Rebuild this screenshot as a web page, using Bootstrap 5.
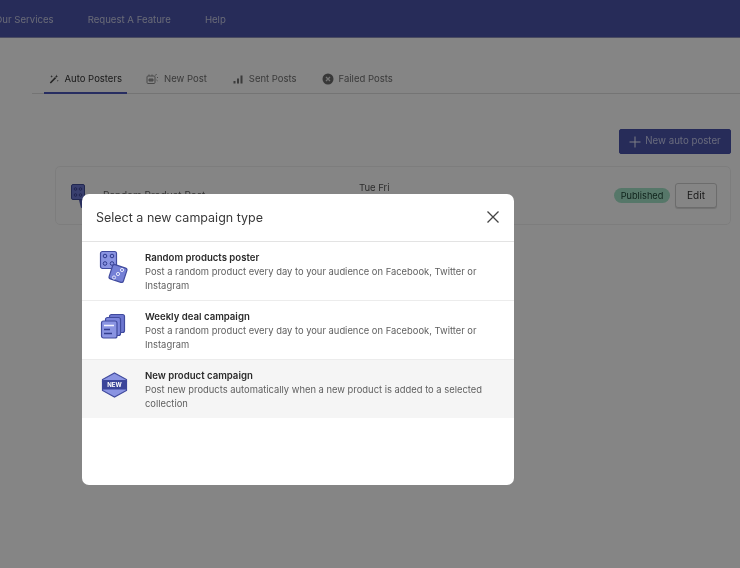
<!DOCTYPE html>
<html lang="en"><head><meta charset="utf-8"><title>Auto Posters</title>
<link rel="stylesheet" href="https://cdn.jsdelivr.net/npm/bootstrap@5.3.0/dist/css/bootstrap.min.css">
<style>
html,body{height:100%;overflow:hidden}
body{font-family:Inter,"Liberation Sans",sans-serif;background:#fbfbfb;font-size:9.5px;color:#333}
.app-shell{height:568px;position:relative;overflow:hidden}
.top-bar{height:38px;background:#4a53a8;border-bottom:1px solid #8a8fb8;color:#c5c8e0;gap:34px;margin-left:-5px;padding-top:2px;font-size:9.6px;line-height:1}
.tab-strip{margin:31px 0 0 32px;height:25px;border-bottom:1px solid #dcdcdc;padding-left:12px}
.tab-item{display:flex;align-items:center;gap:5px;height:25px;padding:0 5px 5px;color:#6f6f6f;margin-right:15px;white-space:nowrap}
.tab-item.is-on{color:#333;border-bottom:2px solid #4b56b8;margin-right:14px;width:83px;padding-bottom:3px}
.action-row{margin:35px 9px 0 0;justify-content:flex-end}
.new-btn{width:112px;height:25px;background:#4a53a8;border:1px solid #4650a8;border-radius:2px;color:#c4c8ea;font-size:9.7px;padding:0;display:flex;align-items:center;justify-content:center;gap:4px}
.post-card{margin:12px 9px 0 55px;height:59px;border:1px solid #ececec;border-radius:5px;background:#fcfcfc;padding:0 13px 0 15px}
.post-title{color:#666;margin-left:15px;width:256px;font-size:10px;flex:none}
.post-days{color:#555;margin-top:-14px}
.pub-badge{background:#a3e0c6;border-radius:8px;color:#1e4436;font-size:9.2px;height:15px;width:56px;line-height:15px;text-align:center;margin-right:5px}
.edit-btn{width:42px;height:25px;padding:0;font-size:10px;color:#333;background:#fcfcfc;border:1px solid #ccc;border-radius:3px;box-shadow:0 1px 1px rgba(0,0,0,.15)}
.dim-layer{position:absolute;inset:0;background:rgba(0,0,0,.47)}
.type-dialog{position:absolute;left:82px;top:194px;width:432px;height:291px;background:#fff;border-radius:7px;overflow:hidden}
.dialog-head{height:48px;border-bottom:1px solid #e3e3e3;padding:0 14px}
.dialog-head h2{font-size:12.5px;font-weight:400;margin:0;color:#3a3a3a}
.shut-btn{border:0;background:none;padding:0;width:14px;height:14px;display:block;margin-bottom:1px}
.type-row{height:59px;border-bottom:1px solid #ececec;padding:9px 10px 0 17px;gap:16px}
.type-row.is-sel{background:#f5f5f5;border-bottom:0;height:58px}
.type-row h3{font-size:9.6px;font-weight:600;margin:0;color:#2a2a2a;line-height:14px}
.type-row p{font-size:9.4px;margin:0;color:#5f5f5f;line-height:14px}
.type-art{width:30px;height:38px;flex:none;margin-top:-1px}
.soft-edge{filter:blur(.4px)}
</style></head><body>
<div class="app-shell soft-edge">
  <nav class="top-bar d-flex align-items-center">
    <span>Our Services</span><span>Request A Feature</span><span>Help</span>
  </nav>
  <div class="tab-strip d-flex">
    <div class="tab-item is-on"><svg width="12" height="12" viewBox="0 0 12 12"><path d="M1.500 10.500 7.500 4.500" stroke="#444" stroke-width="1.800"/><path d="M8.500 1 9 2.500 10.500 3 9 3.500 8.500 5 8 3.500 6.500 3 8 2.500ZM3 1.500l.4 1.100 1.100.4-1.100.4L3 4.500l-.4-1.100L1.500 3l1.100-.4ZM10 7l.3.8.8.3-.8.3-.3.8-.3-.8-.8-.3.8-.3Z" fill="#444"/></svg><span>Auto Posters</span></div>
    <div class="tab-item"><svg width="13" height="12" viewBox="0 0 13 12" fill="none" stroke="#8a8a8a"><rect x="1" y="3" width="8" height="7.500" rx="1"/><path d="M3 3V1.500M6 3V1.500M10.500 1 9.500 2.500M11 4.500H12M10.500 7l1 .8"/><path d="M3 6h4v2H3z" fill="#9a9a9a"/></svg><span>New Post</span></div>
    <div class="tab-item"><svg width="12" height="12" viewBox="0 0 12 12" fill="#707070"><rect x="1.500" y="8" width="2" height="2.500"/><rect x="5" y="5.500" width="2" height="5"/><rect x="8.500" y="2.500" width="2" height="8"/></svg><span>Sent Posts</span></div>
    <div class="tab-item"><svg width="12" height="12" viewBox="0 0 12 12"><circle cx="6" cy="6" r="5.500" fill="#6a6a6a"/><path d="M4 4l4 4M8 4l-4 4" stroke="#ddd" stroke-width="1.300"/></svg><span>Failed Posts</span></div>
  </div>
  <div class="action-row d-flex">
    <button class="btn new-btn" type="button"><svg width="12" height="12" viewBox="0 0 12 12"><path d="M6 .5v11M.5 6h11" stroke="#eceefc"/></svg>New auto poster</button>
  </div>
  <div class="post-card d-flex align-items-center">
    <svg width="17" height="24" viewBox="0 0 17 24"><rect x=".5" y=".5" width="13" height="15" rx="1.500" fill="#6d77d0" stroke="#3f4a96"/><g fill="none" stroke="#2a3380" stroke-width=".7"><circle cx="4.500" cy="5" r="1.300"/><circle cx="9.500" cy="5" r="1.300"/><circle cx="4.500" cy="11" r="1.300"/><circle cx="9.500" cy="11" r="1.300"/></g><path d="M8 16l7-1 2 7-7 2z" fill="#4f59b0"/></svg>
    <span class="post-title">Random Product Post</span>
    <span class="post-days">Tue Fri</span>
    <span class="pub-badge ms-auto">Published</span>
    <button class="btn edit-btn" type="button">Edit</button>
  </div>
  <div class="dim-layer"></div>
  <div class="type-dialog">
    <div class="dialog-head d-flex align-items-center justify-content-between">
      <h2>Select a new campaign type</h2>
      <button class="shut-btn" type="button" aria-label="Close"><svg width="14" height="14" viewBox="0 0 14 14"><path d="M1.500 1.500l11 11M12.500 1.500l-11 11" stroke="#444" stroke-width="1.300"/></svg></button>
    </div>
    <div class="type-row d-flex">
      <svg class="type-art" viewBox="0 0 30 38"><rect x="1.500" y="1.500" width="16" height="17" rx="2" fill="#8a94e2" stroke="#414b9e" stroke-width="1.200"/><g fill="none" stroke="#2f3a8c"><circle cx="6" cy="6" r="1.800"/><circle cx="13" cy="6" r="1.800"/><circle cx="6" cy="13.500" r="1.800"/><circle cx="13" cy="13.500" r="1.800"/></g><rect x="11.500" y="16" width="15" height="15" rx="2" transform="rotate(18 19 23.500)" fill="#7580d6" stroke="#414b9e" stroke-width="1.200"/><g fill="none" stroke="#e5e7fb"><circle cx="15" cy="27.500" r="1.600"/><circle cx="19" cy="24" r="1.600"/><circle cx="23" cy="20" r="1.600"/></g></svg>
      <div><h3>Random products poster</h3><p>Post a random product every day to your audience on Facebook, Twitter or Instagram</p></div>
    </div>
    <div class="type-row d-flex">
      <svg class="type-art" viewBox="0 0 30 38"><rect x="10.500" y="5.500" width="15" height="18" rx="2" fill="#6c76cf" stroke="#414b9e" stroke-width="1.200"/><rect x="6.500" y="8.500" width="15" height="18" rx="2" fill="#7c86dc" stroke="#414b9e" stroke-width="1.200"/><rect x="2.500" y="12" width="15.500" height="17" rx="2" fill="#8a94e2" stroke="#414b9e" stroke-width="1.200"/><path d="M5 16.500h10" stroke="#f2f3ff" stroke-width="1.500"/><path d="M5 20.500h6M5 24.500h8" stroke="#333d8e" stroke-width="1.300"/></svg>
      <div><h3>Weekly deal campaign</h3><p>Post a random product every day to your audience on Facebook, Twitter or Instagram</p></div>
    </div>
    <div class="type-row is-sel d-flex">
      <svg class="type-art" viewBox="0 0 30 38"><path d="M15.500 5 27.500 11.500v11L15.500 29 3.500 22.500v-11z" fill="#8a94e2" stroke="#414b9e" stroke-width="1.200"/><rect x="3" y="12" width="25" height="9.500" rx="1.500" fill="#3b4599"/><text x="15.500" y="19.200" text-anchor="middle" font-size="6" font-weight="700" font-family="Inter,sans-serif" fill="#fff">NEW</text></svg>
      <div><h3>New product campaign</h3><p>Post new products automatically when a new product is added to a selected collection</p></div>
    </div>
  </div>
</div>
<script src="https://cdn.jsdelivr.net/npm/bootstrap@5.3.0/dist/js/bootstrap.bundle.min.js"></script>
</body></html>
